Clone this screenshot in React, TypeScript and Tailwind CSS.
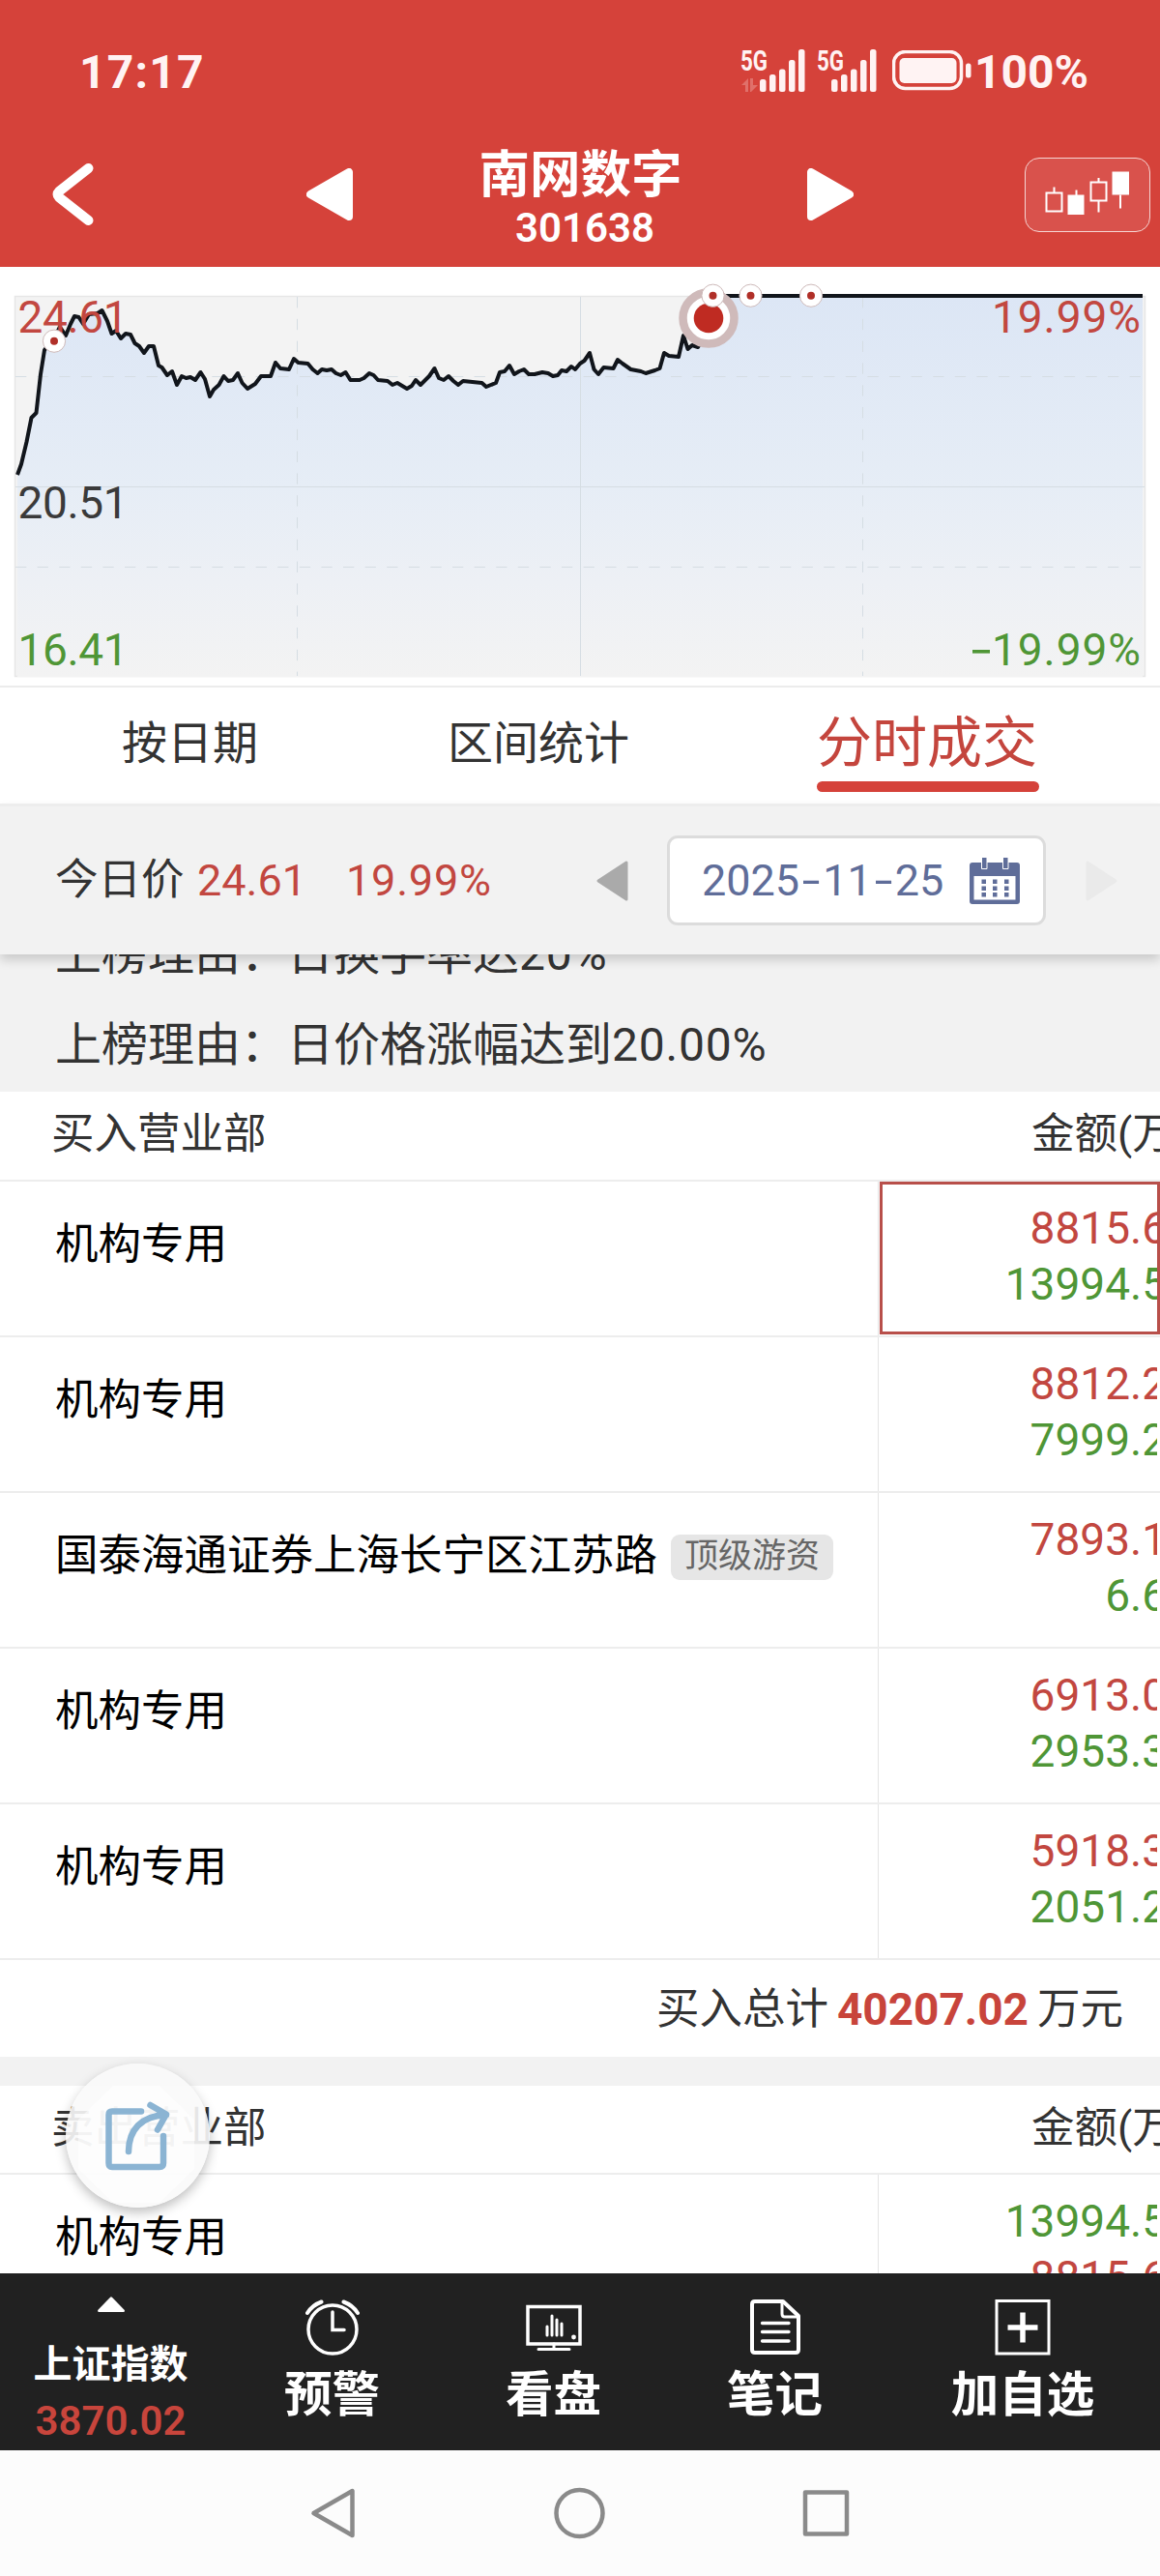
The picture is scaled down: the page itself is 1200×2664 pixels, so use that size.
import React from "react";

interface Seat {
  name: string;
  tag?: string;
  buy: string;
  sell: string;
  active?: boolean;
}

const buySeats: Seat[] = [
  { name: "机构专用", buy: "8815.6", sell: "13994.5", active: true },
  { name: "机构专用", buy: "8812.2", sell: "7999.2" },
  { name: "国泰海通证券上海长宁区江苏路", tag: "顶级游资", buy: "7893.1", sell: "6.6" },
  { name: "机构专用", buy: "6913.0", sell: "2953.3" },
  { name: "机构专用", buy: "5918.3", sell: "2051.2" },
];

const PRICE_LINE =
  "18,491 22,480 27.5,457 32.5,432 37.5,427 42,387 46,362 57,348 62,338 68,347 73,335 77,327 81.5,328 86,335 92,325 101,324 105.5,321 111,332 115.5,345 120,342 125,350 130,345 135,346 139.5,355 144,358 149,365 154,358 159,358 164,378 167.5,380 173,388 178,384 183,398 188,389 192.5,391 197,390 202,393 207.5,385 212,392 217,410 221,403 226.5,398 231.5,389 236,394 241,393 246,386 250.5,396 256,402 264,397 270,389 280,389 285,375 290,381 299,382 304,371 308.5,375 318.5,376 323.5,382 328.5,386 333,382 338,383 343,382 347.5,386 352.5,388 357.5,385 362.5,393 372,393 376.5,391 382,386 386.5,388 391,393 401,394 406,398 411,396 416,399 421,402 426,399 430,393 435,398 444,389 449.5,381 454,391 459,393 464,389 469,394 474,398 479,394 498.5,396 503,400 513,396 517,385 522,384 527,378 532,387 537,384 542,382 547,387 553,387 561,385 567,386 572,389 577,388 581,383 586,384 591,379 595,382 600,376 604.5,373 610,365 614.5,382 619,387 624.5,380 634.5,381 639,372 644,376 652.5,382 663,384 668,386 677.5,383 682.5,381 687,365 692,368 702,369 707,347 711.5,361 716,357 722,359 732,340 745,306 1182,306";

const markers = [
  [56, 352.7],
  [737.5, 305.7],
  [776.5, 305.7],
  [839, 305.7],
];

function Signal({ data }: { data?: boolean }) {
  return (
    <svg className="overflow-visible" width="70" height="44" viewBox="0 0 70 44" fill="#fff3f3">
      <text x="0" y="22" fontSize="29" fontWeight="700" textLength="28" lengthAdjust="spacingAndGlyphs">
        5G
      </text>
      {data && (
        <path d="M1 37 L8 30 V44 H5 V37 Z M10 30 H13 V37 H18 L11 44 H10 Z" fill="#e0706a" />
      )}
      <g transform={data ? "translate(0 0)" : "translate(-5 0)"}>
        <rect x="20" y="31" width="6.5" height="13" rx="2.5" />
        <rect x="30" y="26" width="6.5" height="18" rx="2.5" />
        <rect x="40" y="20.500" width="6.500" height="23.500" rx="2.5" />
        <rect x="50" y="11" width="6.500" height="33" rx="2.5" />
        <rect x="60" y="0" width="6.500" height="44" rx="2.5" />
      </g>
    </svg>
  );
}

function StatusBar() {
  return (
    <div className="flex h-[146px] items-center pl-[82px] text-[48px] font-bold text-[#fff3f3]">
      <span className="flex-1 pt-[3px] tracking-[1.2px]">17:17</span>
      <div className="flex w-[434px] items-center">
        <div className="flex w-[157px] gap-[9px]">
          <Signal data />
          <Signal />
        </div>
        <svg width="84" height="42" viewBox="0 0 84 42">
          <rect x="1.500" y="1.500" width="70" height="38" rx="12" fill="none" stroke="#fff3f3" strokeWidth="3.500" />
          <rect x="7.500" y="8" width="59" height="26" rx="5" fill="#fff3f3" />
          <rect x="76" y="13.500" width="5.500" height="15" rx="2.500" fill="#fff3f3" />
        </svg>
        <span className="ml-[1px] pt-[3px]">100%</span>
      </div>
    </div>
  );
}

function TitleBar() {
  return (
    <div className="flex h-[130px] text-white">
      <div className="w-[317px] pt-[23px] pl-[54px]">
        <svg width="44" height="64" viewBox="0 0 44 64" fill="none" stroke="#fff" strokeWidth="10" strokeLinecap="round" strokeLinejoin="round">
          <path d="M37.500 5 L7 29 Q4 32 7 35 L37.500 59" />
        </svg>
      </div>
      <div className="w-[150px] pt-[28px]">
        <svg width="48" height="54" viewBox="0 0 48 54">
          <path d="M4 27 L44 4 V50 Z" fill="#fff" stroke="#fff" strokeWidth="8" strokeLinejoin="round" />
        </svg>
      </div>
      <div className="flex w-[276px] flex-col items-center">
        <div className="h-[63px] pr-[9px] text-[52.5px] leading-[70px] font-bold whitespace-nowrap">南网数字</div>
        <div className="text-[42px] leading-[54px] font-semibold">301638</div>
      </div>
      <div className="w-[317px] pt-[28px] pl-[92px]">
        <svg width="48" height="54" viewBox="0 0 48 54">
          <path d="M44 27 L4 4 V50 Z" fill="#fff" stroke="#fff" strokeWidth="8" strokeLinejoin="round" />
        </svg>
      </div>
      <div className="mt-[17px] h-[77px] w-[130px] rounded-[15px] border-[1.5px] border-[#f6d5d3] bg-[#d9524c]">
        <svg width="127" height="74" viewBox="1061.5 164.5 127 74" fill="none" stroke="#fff" strokeWidth="2">
          <path d="M1083 200 H1099 V219 H1083 Z M1091 194 V200 M1114 197 V203 M1129 189 H1145 V208 H1129 Z M1137 184.500 V189 M1137 208 V220 M1159.500 202 V216" />
          <path d="M1105 202 H1122 V222.500 H1105 Z M1151 178 H1168.500 V202 H1151 Z" fill="#fff" stroke="none" />
        </svg>
      </div>
    </div>
  );
}

function PriceChart() {
  return (
    <svg className="block" width="1200" height="433" viewBox="0 276 1200 433">
      <defs>
        <linearGradient id="area" x1="0" y1="306" x2="0" y2="700" gradientUnits="userSpaceOnUse">
          <stop offset="0" stopColor="#dce6f5" />
          <stop offset="0.5" stopColor="#e6edf6" />
          <stop offset="0.75" stopColor="#edf0f5" />
          <stop offset="1" stopColor="#f3f3f3" />
        </linearGradient>
      </defs>
      <rect x="15.500" y="306.500" width="1169" height="393" fill="#f3f3f3" stroke="#e6e6e6" strokeWidth="1.500" />
      <polygon points={`18,700 ${PRICE_LINE} 1182,700`} fill="url(#area)" />
      <g stroke="#d5dde3" strokeWidth="1">
        <path d="M16 503.500 H1184 M600.500 307 V699" />
        <path d="M16 389.500 H1184 M16 586.500 H1184" strokeDasharray="11.300 11.300" />
        <path d="M307.500 307 V699 M892.500 307 V699" strokeDasharray="11.400 11.400" />
      </g>
      <polyline points={PRICE_LINE} fill="none" stroke="#11151b" strokeWidth="4" strokeLinejoin="round" />
      <g fontSize="46">
        <text x="18.500" y="344" fill="#c24740" textLength="114">24.61</text>
        <text x="18.500" y="536" fill="#3a3a3a" textLength="114">20.51</text>
        <text x="18.500" y="687.500" fill="#4f9636" textLength="114">16.41</text>
        <text x="1026" y="344" fill="#c24740" textLength="154">19.99%</text>
        <text x="1026" y="687.500" fill="#4f9636" textLength="154">19.99%</text>
        <rect x="1006" y="672" width="18" height="3.600" fill="#4f9636" />
      </g>
      <circle cx="733" cy="329" r="26.500" fill="#fff" stroke="#cfbaba" strokeWidth="8.500" />
      <circle cx="733" cy="329" r="15.300" fill="#bf2b22" />
      {markers.map(([x, y]) => (
        <g key={x}>
          <circle cx={x} cy={y} r="11.600" fill="#fff" stroke="#cdb9b9" strokeWidth="1" />
          <circle cx={x} cy={y} r="4" fill="#b02f28" />
        </g>
      ))}
    </svg>
  );
}

function Tabs() {
  return (
    <div className="flex h-[122px] border-t-2 border-[#ececec] bg-white text-[#333]">
      <div className="w-[395px] pl-[126px] text-[47px] leading-[115px]">按日期</div>
      <div className="w-[450px] pl-[68px] text-[47px] leading-[115px]">区间统计</div>
      <div className="w-[230px] text-[57px] leading-[116px] whitespace-nowrap text-[#c4453d]">
        <div className="h-[97px]">分时成交</div>
        <div className="h-[11px] rounded-full bg-[#d5423a]" />
      </div>
    </div>
  );
}

// the font's hyphen is narrower than a digit, so it gets its own stretched box
function Dash() {
  return <span className="inline-block w-[24px] scale-x-150 text-center">-</span>;
}

function DateBar() {
  return (
    <div className="relative z-10 flex h-[156px] items-center border-t-[3px] border-[#ededed] bg-[#f2f2f2] pl-[57px] text-[45px] shadow-[0_6px_10px_rgba(0,0,0,0.16)]">
      <span className="w-[147px] text-[44.5px] text-[#333]">今日价</span>
      <span className="w-[154px] text-[#c24740]">24.61</span>
      <span className="w-[259px] tracking-[0.8px] text-[#c24740]">19.99%</span>
      <svg width="33" height="42" viewBox="0 0 33 42">
        <path d="M2 21 L31 2 V40 Z" fill="#aaa" stroke="#aaa" strokeWidth="3" strokeLinejoin="round" />
      </svg>
      <div className="ml-[40px] flex h-[93px] w-[392px] items-center rounded-[11px] border-[3px] border-[#dcdcdc] bg-white pl-[33px] text-[#5f6d99]">
        <span className="w-[277px] whitespace-nowrap">
          2025
          <Dash />
          11
          <Dash />
          25
        </span>
        <svg width="52" height="48" viewBox="0 0 52 48" fill="#5f6d99">
          <path fillRule="evenodd" d="M3 5 H49 Q52 5 52 8 V45 Q52 48 49 48 H3 Q0 48 0 45 V8 Q0 5 3 5 Z M4.500 19 V43.500 H47.500 V19 Z" />
          <path d="M12.500 -1 H18 V11.500 H12.500 Z M34.500 -1 H40 V11.500 H34.500 Z" stroke="#fff" strokeWidth="1" />
          {[22.5, 29.5, 36].map((y) => (
            <g key={y}>
              <rect x="12.500" y={y} width="4.500" height="4.500" />
              <rect x="24" y={y} width="4.500" height="4.500" />
              <rect x="36" y={y} width="4.500" height="4.500" />
            </g>
          ))}
        </svg>
      </div>
      <svg className="ml-[41px]" width="33" height="42" viewBox="0 0 33 42">
        <path d="M31 21 L2 2 V40 Z" fill="#eaeaea" stroke="#eaeaea" strokeWidth="3" strokeLinejoin="round" />
      </svg>
    </div>
  );
}

function SectionHeader({ title, className }: { title: string; className: string }) {
  return (
    <div className={`flex border-b-2 border-[#ededed] bg-white text-[44.5px] text-[#333] ${className}`}>
      <span className="w-[1067px] shrink-0 pl-[53px]">{title}</span>
      <span className="whitespace-nowrap">金额(万元)</span>
    </div>
  );
}

function SeatRow({ name, tag, top, bottom, topRed, active }: { name: string; tag?: string; top: string; bottom: string; topRed: boolean; active?: boolean }) {
  return (
    <div className="flex h-[161px] border-b-2 border-[#ededed] bg-white">
      <div className="flex h-[159px] w-[909px] shrink-0 border-r-[1.5px] border-[#e4e4e4] pl-[57px] text-[44.5px] leading-[131px] text-black">
        {name}
        {tag && (
          <span className="mt-[43px] ml-[14px] h-[47px] w-[168px] rounded-[9px] bg-[#e6e6e6] text-center text-[35px] leading-[46px] text-[#666]">
            {tag}
          </span>
        )}
      </div>
      <div className={`ml-px h-[158px] w-[290px] overflow-hidden border-[3px] text-[46px] leading-[58px] ${active ? "border-[#b84f4a]" : "border-transparent"}`}>
        <div className="-mr-[10px] pt-[16px] text-right">
          <div className={topRed ? "text-[#c24740]" : "text-[#4f9636]"}>{top}</div>
          <div className={topRed ? "text-[#4f9636]" : "text-[#c24740]"}>{bottom}</div>
        </div>
      </div>
    </div>
  );
}

function ShareButton() {
  return (
    <div className="absolute top-[1147px] left-[68px] h-[149px] w-[149px] rounded-full shadow-[0_5px_12px_rgba(0,0,0,0.25)]">
      <svg width="149" height="149" viewBox="68 2134 149 149" fill="none" stroke="#8bb4d3" strokeWidth="6.500" strokeLinecap="round" strokeLinejoin="round">
        <circle cx="142.500" cy="2208.500" r="74.500" fill="#fafafa" fillOpacity="0.9" stroke="none" />
        <path d="M117 2157 H165 L201 2192 V2243 L165 2278 H117 L81 2243 V2192 Z" fill="#fff" fillOpacity="0.5" stroke="none" />
        <path d="M146 2183.500 H116 Q112.500 2183.500 112.500 2187 V2237 Q112.500 2241 116 2241 H165 Q169 2241 169 2237 V2209" />
        <path d="M133 2225 C133 2203 146 2188 172 2187 M155.500 2177 L172 2186.500 L163 2202.500" />
      </svg>
    </div>
  );
}

function BottomBar() {
  return (
    <div className="flex h-[183px] bg-[#212121] text-[49.5px] font-bold text-white">
      <div className="flex w-[229px] flex-col items-center pt-[24px] text-[40px]">
        <svg width="34" height="19" viewBox="0 0 34 19">
          <path d="M17 2 L32 17.500 H2 Z" fill="#fff" stroke="#fff" strokeWidth="3" strokeLinejoin="round" />
        </svg>
        <div className="mt-[25px] h-[58px] leading-[60px]">上证指数</div>
        <div className="text-[42px] leading-[60px] font-semibold text-[#c8453c]">3870.02</div>
      </div>
      <div className="flex w-[229px] flex-col items-center pt-[27px]">
        <svg width="56" height="58" viewBox="0 0 56 58" fill="none" stroke="#fff" strokeWidth="3.500" strokeLinecap="round">
          <circle cx="28" cy="31" r="25" />
          <path d="M28 13 V31.500 H40" />
          <path d="M2 14 Q7 6 16.500 2.500 M54 14 Q49 6 39.500 2.500" strokeWidth="4" />
        </svg>
        <div className="mt-[10px] leading-[62px]">预警</div>
      </div>
      <div className="flex w-[229px] flex-col items-center pt-[27px]">
        <svg width="58" height="58" viewBox="0 0 58 58" fill="none" stroke="#fff" strokeWidth="3">
          <path d="M2 7.500 H56 V46 H2 Z" strokeWidth="3.500" />
          <path d="M29 46 V50 M13 51.500 H45" strokeLinecap="round" />
          <path d="M22 28 V37 M27 17 V37 M32 21 V37 M37 25 V37" strokeLinecap="round" />
          <circle cx="49.500" cy="39" r="2.400" fill="#fff" stroke="none" />
        </svg>
        <div className="mt-[10px] leading-[62px]">看盘</div>
      </div>
      <div className="flex w-[229px] flex-col items-center pt-[27px]">
        <svg width="54" height="58" viewBox="0 0 54 58" fill="none" stroke="#fff" strokeWidth="4" strokeLinejoin="round">
          <path d="M6 2 H35 L51 17 V52 Q51 55 48 55 H6 Q3 55 3 52 V5 Q3 2 6 2 Z" />
          <path d="M34 3 V15 Q34 18 37 18 H50" strokeWidth="3" />
          <path d="M13.500 24.500 H41 M13.500 33.500 H41 M13.500 43 H41" strokeWidth="3.300" strokeLinecap="round" />
        </svg>
        <div className="mt-[10px] leading-[62px]">笔记</div>
      </div>
      <div className="flex w-[284px] flex-col items-center pt-[27px]">
        <svg width="58" height="58" viewBox="0 0 58 58" fill="none" stroke="#fff">
          <rect x="2" y="1.500" width="54" height="54.500" strokeWidth="3" />
          <path d="M13.500 29 H44.500 M29 13.500 V44.500" strokeWidth="5.500" />
        </svg>
        <div className="mt-[10px] leading-[62px]">加自选</div>
      </div>
    </div>
  );
}

function SystemNav() {
  return (
    <div className="flex h-[130px] items-center justify-center bg-[#fcfcfc]">
      <svg width="560" height="54" viewBox="320 2572 560 54" fill="none" stroke="#8a8a8a" strokeWidth="4.500" strokeLinejoin="round">
        <path d="M324.500 2599 L364.500 2576 V2622 Z" />
        <circle cx="599.500" cy="2599" r="24" />
        <rect x="833" y="2577.500" width="43" height="43" />
      </svg>
    </div>
  );
}

export default function App() {
  return (
    <div className="h-[2664px] w-[1200px] overflow-hidden bg-white font-['Roboto','Noto_Sans_CJK_SC',sans-serif]">
      <header className="bg-[#d5423a]">
        <StatusBar />
        <TitleBar />
      </header>
      <PriceChart />
      <Tabs />
      <DateBar />
      <main className="relative flow-root h-[1364px] overflow-hidden bg-[#f2f2f2]">
        <div className="-mt-[47px] h-[189px] pl-[57px] text-[48px] leading-[94px] text-[#333]">
          <div>
            上榜理由：日换手率达<span className="tracking-[0.8px]">20%</span>
          </div>
          <div>
            上榜理由：日价格涨幅达到<span className="tracking-[0.8px]">20.00%</span>
          </div>
        </div>
        <SectionHeader title="买入营业部" className="h-[93px] leading-[88px]" />
        {buySeats.map((s, i) => (
          <SeatRow key={i} name={s.name} tag={s.tag} top={s.buy} bottom={s.sell} topRed active={s.active} />
        ))}
        <div className="mb-[30px] flex h-[100px] items-center justify-end bg-white pt-[2px] pr-[38px] text-[44.5px] text-[#333]">
          买入总计
          <span className="mx-[9px] text-[46px] font-bold text-[#c8443b]">40207.02</span>
          万元
        </div>
        <SectionHeader title="卖出营业部" className="h-[92px] leading-[88px]" />
        <SeatRow name="机构专用" top="13994.5" bottom="8815.6" topRed={false} />
        <ShareButton />
      </main>
      <BottomBar />
      <SystemNav />
    </div>
  );
}
